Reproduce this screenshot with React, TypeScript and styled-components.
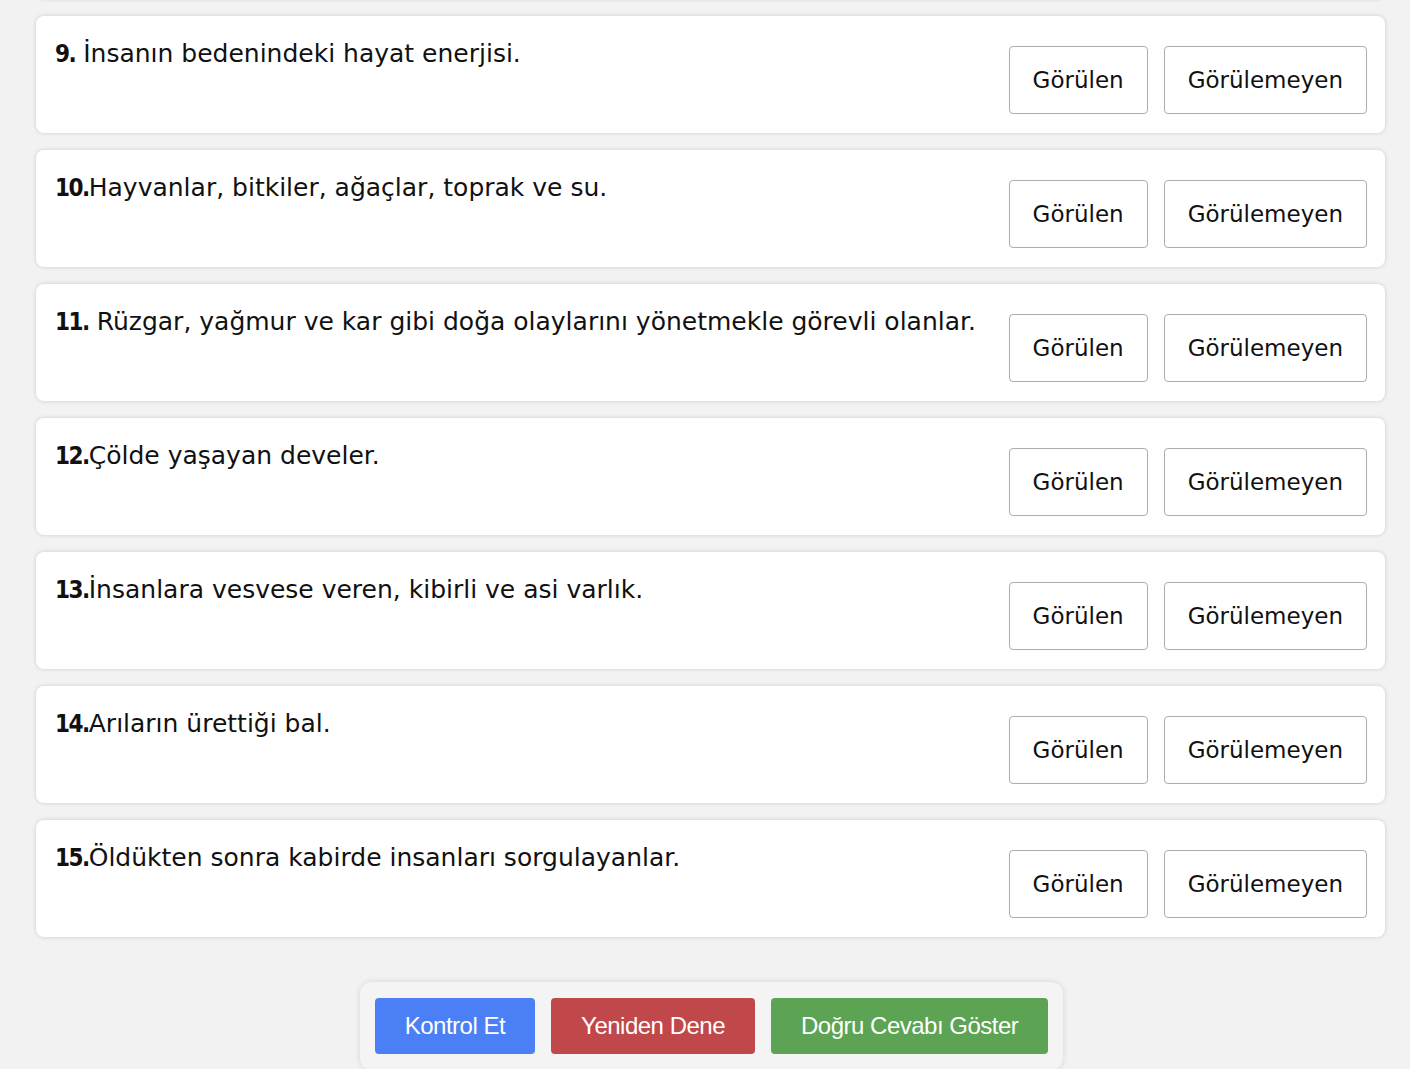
import styled, { createGlobalStyle } from "styled-components";

const GlobalStyle = createGlobalStyle`
  html, body {
    margin: 0;
    padding: 0;
    background: #f2f2f2;
    font-family: "DejaVu Sans", "Noto Sans", sans-serif;
    color: #111;
  }
  * { box-sizing: border-box; }
`;

const Page = styled.div`
  padding: 0 25px 0 36px;
`;

// the page is scrolled: only the shadow of the card before 9 shows at the top
const List = styled.div`
  display: flex;
  flex-direction: column;
  gap: 17px;
  margin-top: -118px;
`;

const Card = styled.div`
  display: flex;
  justify-content: space-between;
  align-items: flex-start;
  min-height: 117px;
  padding: 19px 18px 18px 19px;
  background: #fff;
  border-radius: 8px;
  box-shadow: 0 0 4px rgba(0, 0, 0, 0.16);
`;

const Question = styled.p`
  margin: 0;
  font-size: 25px;
  line-height: 38px;
  color: #111;
`;

const Num = styled.b`
  font-family: "DejaVu Sans Condensed", "Liberation Sans Narrow", "Liberation Sans", sans-serif;
  font-size: 24px;
  font-weight: 700;
  letter-spacing: -1.5px;
`;

const Choices = styled.div`
  display: flex;
  gap: 16px;
  margin-top: 11px;
  flex-shrink: 0;
`;

const Choice = styled.button`
  height: 68px;
  padding: 0 23px;
  background: #fff;
  border: 1px solid #adadad;
  border-radius: 4px;
  font-family: inherit;
  font-size: 23px;
  color: #111;
  cursor: pointer;
`;

const Footer = styled.div`
  display: flex;
  justify-content: center;
  margin-top: 45px;
  padding-left: 2px;
`;

const Panel = styled.div`
  display: flex;
  gap: 16px;
  padding: 16px 15px;
  background: #f4f4f4;
  border-radius: 12px;
  box-shadow: 0 0 6px rgba(0, 0, 0, 0.12);
`;

const Action = styled.button<{ $bg: string }>`
  height: 56px;
  padding: 0 30px;
  border: none;
  border-radius: 4px;
  background: ${(p) => p.$bg};
  color: #fff;
  font-family: "Liberation Sans", Arial, sans-serif;
  font-size: 24px;
  letter-spacing: -0.5px;
  cursor: pointer;
`;

const questions: { n: string; text: string; space?: boolean }[] = [
  { n: "9.", text: "İnsanın bedenindeki hayat enerjisi.", space: true },
  { n: "10.", text: "Hayvanlar, bitkiler, ağaçlar, toprak ve su." },
  { n: "11.", text: "Rüzgar, yağmur ve kar gibi doğa olaylarını yönetmekle görevli olanlar.", space: true },
  { n: "12.", text: "Çölde yaşayan develer." },
  { n: "13.", text: "İnsanlara vesvese veren, kibirli ve asi varlık." },
  { n: "14.", text: "Arıların ürettiği bal." },
  { n: "15.", text: "Öldükten sonra kabirde insanları sorgulayanlar." },
];

const App = () => {
  return (
    <Page>
      <GlobalStyle />
      <List>
        <Card aria-hidden />
        {questions.map((q) => (
          <Card key={q.n}>
            <Question>
              <Num>{q.n}</Num>
              {q.space ? " " : ""}
              {q.text}
            </Question>
            <Choices>
              <Choice>Görülen</Choice>
              <Choice>Görülemeyen</Choice>
            </Choices>
          </Card>
        ))}
      </List>
      <Footer>
        <Panel>
          <Action $bg="#4a7ff6">Kontrol Et</Action>
          <Action $bg="#c0474a">Yeniden Dene</Action>
          <Action $bg="#5ca453">Doğru Cevabı Göster</Action>
        </Panel>
      </Footer>
    </Page>
  );
};

export default App;
